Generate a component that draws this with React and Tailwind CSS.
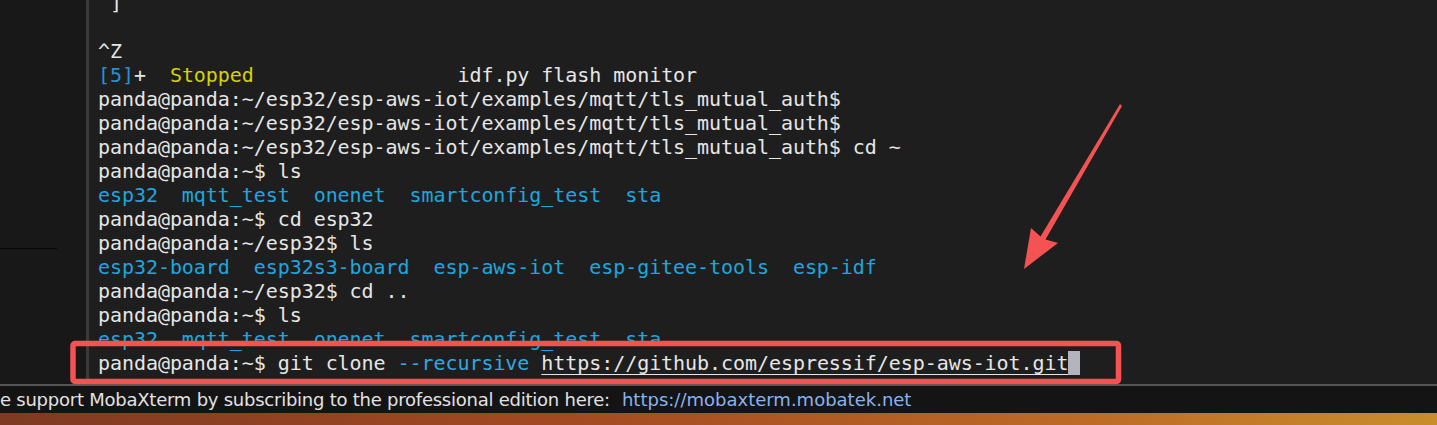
import React from "react";

const W = "text-[#e6e6e6]";
const C = "text-[#1ea6de]";

function Line({ children }) {
  return <div className="h-[24px] leading-[24px] whitespace-pre">{children || " "}</div>;
}

export default function App() {
  const p1 = "panda@panda:~/esp32/esp-aws-iot/examples/mqtt/tls_mutual_auth$";
  return (
    <div className="relative w-[1437px] h-[425px] overflow-hidden flex flex-col bg-[#141414]">
      <div className="flex h-[384px]">
        <div className="w-[86px] bg-[#181818] flex flex-col">
          <div className="h-[248px]" />
          <div className="w-[57px] h-[1px] bg-[#050505]" />
        </div>
        <div className="w-[3px] bg-[#3a3a3a]" />
        <div
          className={`flex-1 bg-[#1e1e1e] pl-[9px] overflow-hidden text-[20px] tracking-[-0.06px] ${W}`}
          style={{ fontFamily: '"DejaVu Sans Mono", monospace' }}
        >
          <div className="-mt-[9px]">
            <Line> ]</Line>
            <Line />
            <Line>^Z</Line>
            <Line>
              <span className="text-[#2b8fd0]">[5]</span>+  <span className="text-[#d4d400]">Stopped</span>
              {"                 idf.py flash monitor"}
            </Line>
            <Line>{p1}</Line>
            <Line>{p1}</Line>
            <Line>{p1 + " cd ~"}</Line>
            <Line>panda@panda:~$ ls</Line>
            <Line>
              <span className={C}>esp32  mqtt_test  onenet  smartconfig_test  sta</span>
            </Line>
            <Line>panda@panda:~$ cd esp32</Line>
            <Line>panda@panda:~/esp32$ ls</Line>
            <Line>
              <span className={C}>esp32-board  esp32s3-board  esp-aws-iot  esp-gitee-tools  esp-idf</span>
            </Line>
            <Line>panda@panda:~/esp32$ cd ..</Line>
            <Line>panda@panda:~$ ls</Line>
            <Line>
              <span className={C}>esp32  mqtt_test  onenet  smartconfig_test  sta</span>
            </Line>
            <div className="h-[24px] leading-[24px] whitespace-pre flex">
              <span>panda@panda:~$ git clone </span>
              <span className="text-[#33a8e0]">--recursive</span>
              <span> </span>
              <span className="underline underline-offset-[4px] decoration-1">https://github.com/espressif/esp-aws-iot.git</span>
              <span className="inline-block w-[12px] h-[24px] bg-[#b4b4c0]" />
            </div>
          </div>
        </div>
      </div>
      <div className="h-[2px] bg-[#555555]" />
      <div
        className="h-[27px] bg-[#141414] flex items-center text-[18px] text-[#e2e2e2] whitespace-pre"
        style={{ fontFamily: '"DejaVu Sans", sans-serif' }}
      >
        <span className="tracking-[-0.24px]">e support MobaXterm by subscribing to the professional edition here:</span>
        <span className="ml-[12px] text-[#8ab2f0]">https://mobaxterm.mobatek.net</span>
      </div>
      <div className="h-[12px] bg-[linear-gradient(to_right,#7e3a22,#a44a22_40%,#bd6a26_75%,#c98d2c)]" />

      <svg className="absolute left-0 top-0 pointer-events-none" width="1437" height="425">
        <rect x="73" y="343.5" width="1045.5" height="38" rx="2" fill="none" stroke="#f55353" strokeWidth="5.5" />
        <polygon
          points="1120,104 1122,106 1045.5,239.5 1058,243 1024,269 1031,228 1040.5,236.5"
          fill="#f55353"
        />
      </svg>
    </div>
  );
}
